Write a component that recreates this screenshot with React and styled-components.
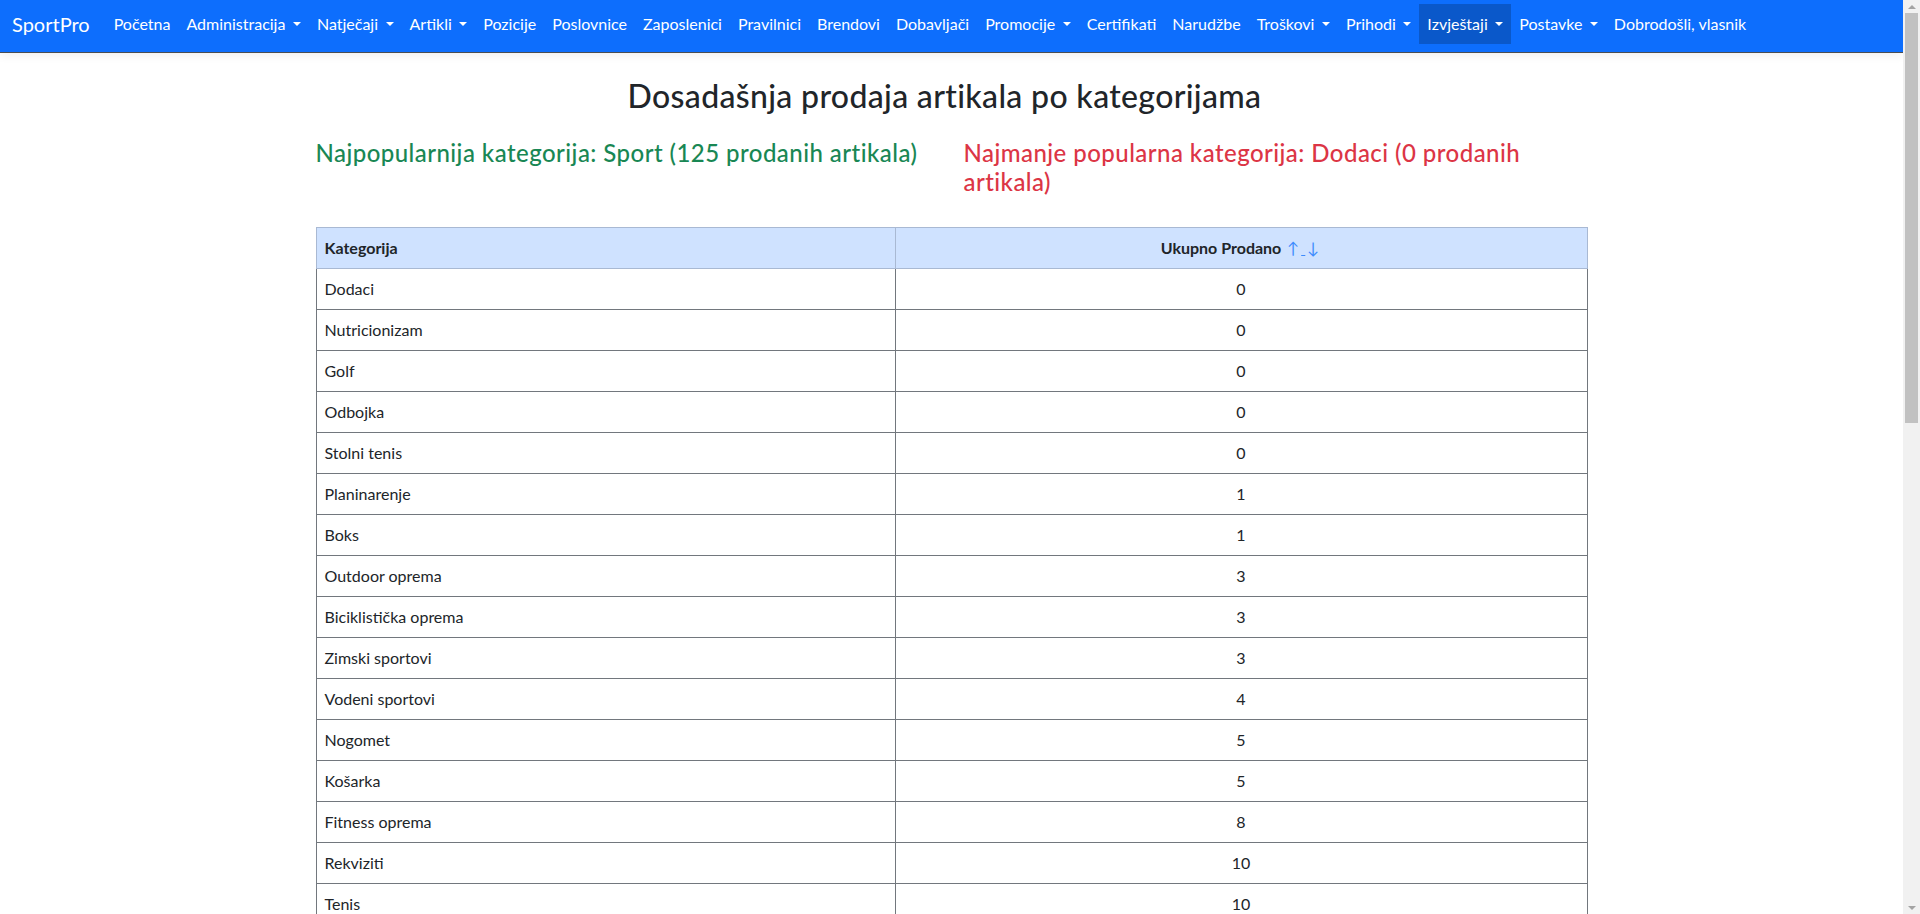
import React from 'react'
import styled, { createGlobalStyle } from 'styled-components'

const GlobalStyle = createGlobalStyle`
  body {
    margin: 0;
    font-family: Lato, "Noto Sans", sans-serif;
    font-size: 16px;
    line-height: 1.5;
    color: #212529;
    background: #fff;
  }
  * {
    box-sizing: border-box;
  }
`

const navItems = [
  { label: 'Početna' },
  { label: 'Administracija', dropdown: true },
  { label: 'Natječaji', dropdown: true },
  { label: 'Artikli', dropdown: true },
  { label: 'Pozicije' },
  { label: 'Poslovnice' },
  { label: 'Zaposlenici' },
  { label: 'Pravilnici' },
  { label: 'Brendovi' },
  { label: 'Dobavljači' },
  { label: 'Promocije', dropdown: true },
  { label: 'Certifikati' },
  { label: 'Narudžbe' },
  { label: 'Troškovi', dropdown: true },
  { label: 'Prihodi', dropdown: true },
  { label: 'Izvještaji', dropdown: true, active: true },
  { label: 'Postavke', dropdown: true },
  { label: 'Dobrodošli, vlasnik' },
]

const categories = [
  ['Dodaci', 0],
  ['Nutricionizam', 0],
  ['Golf', 0],
  ['Odbojka', 0],
  ['Stolni tenis', 0],
  ['Planinarenje', 1],
  ['Boks', 1],
  ['Outdoor oprema', 3],
  ['Biciklistička oprema', 3],
  ['Zimski sportovi', 3],
  ['Vodeni sportovi', 4],
  ['Nogomet', 5],
  ['Košarka', 5],
  ['Fitness oprema', 8],
  ['Rekviziti', 10],
  ['Tenis', 10],
  ['Trčanje', 14],
  ['Sport', 125],
]

const App = () => (
  <>
    <GlobalStyle />
    <Page>
      <Navbar>
        <Brand>SportPro</Brand>
        <NavList>
          {navItems.map((item) => (
            <NavLink key={item.label} $active={item.active} $dropdown={item.dropdown}>
              {item.label}
            </NavLink>
          ))}
        </NavList>
      </Navbar>
      <Container>
        <Inner>
          <Title>Dosadašnja prodaja artikala po kategorijama</Title>
          <StatsRow>
            <Stat $tone="#198754">Najpopularnija kategorija: Sport (125 prodanih artikala)</Stat>
            <Stat $tone="#dc3545">Najmanje popularna kategorija: Dodaci (0 prodanih artikala)</Stat>
          </StatsRow>
          <Table>
            <thead>
              <tr>
                <HeadCell $width="579px">Kategorija</HeadCell>
                <HeadCell $center>
                  Ukupno Prodano <SortLink>↑</SortLink><SortGap>&nbsp;</SortGap><SortLink>↓</SortLink>
                </HeadCell>
              </tr>
            </thead>
            <tbody>
              {categories.map(([name, total]) => (
                <tr key={name}>
                  <Cell>{name}</Cell>
                  <Cell $center>{total}</Cell>
                </tr>
              ))}
            </tbody>
          </Table>
        </Inner>
      </Container>
    </Page>
    <Scrollbar>
      <ScrollArrow />
      <ScrollThumb />
      <ScrollArrow $down />
    </Scrollbar>
  </>
)

export default App

const Page = styled.div`
  margin-right: 17px;
`

const Navbar = styled.nav`
  display: flex;
  align-items: flex-start;
  height: 52px;
  padding: 4px 12px 0;
  background: #0d6efd;
  box-shadow: 0 1px 0 #4a4d52, 0 3px 10px rgba(0, 0, 0, 0.07);
  position: relative;
`

const Brand = styled.a`
  margin-right: 16px;
  padding: 5px 0;
  font-size: 20px;
  line-height: 30px;
  color: #fff;
  text-decoration: none;
  white-space: nowrap;
`

const NavList = styled.div`
  display: flex;
  align-items: center;
`

const NavLink = styled.a`
  display: block;
  padding: 8px;
  line-height: 24px;
  color: #fff;
  white-space: nowrap;
  background: ${(p) => (p.$active ? '#0a58ca' : 'transparent')};
  &::after {
    content: ${(p) => (p.$dropdown ? "''" : 'none')};
    display: inline-block;
    margin-left: 7.5px;
    vertical-align: 0.255em;
    border-top: 0.3em solid #fff;
    border-right: 0.28em solid transparent;
    border-left: 0.28em solid transparent;
  }
`

const Container = styled.main`
  max-width: 1320px;
  margin: 25px auto 0;
  padding: 0 12px;
`

const Inner = styled.div`
  padding: 0 12px;
`

const Title = styled.h2`
  margin: 0 0 24px;
  padding-right: 14px;
  font-size: 32px;
  font-weight: 500;
  line-height: 1.2;
  letter-spacing: 0.33px;
  text-align: center;
`

const StatsRow = styled.div`
  display: grid;
  grid-template-columns: 1fr 1fr;
  column-gap: 24px;
  margin-bottom: 30px;
`

const Stat = styled.h4`
  margin: 0;
  font-size: 24px;
  font-weight: 500;
  line-height: 1.2;
  letter-spacing: 0.45px;
  color: ${(p) => p.$tone};
`

const Table = styled.table`
  width: 100%;
  border-collapse: collapse;
`

const HeadCell = styled.th`
  width: ${(p) => p.$width || 'auto'};
  padding: 8px;
  text-align: ${(p) => (p.$center ? 'center' : 'left')};
  font-weight: 700;
  background: #cfe2ff;
  border: 1px solid #a9b9d3;
`

const SortLink = styled.span`
  margin: 0 2px;
  font-weight: 400;
  color: #3d8bfd;
`

const SortGap = styled.span`
  font-weight: 400;
  color: #3d8bfd;
  text-decoration: underline;
`

const Cell = styled.td`
  padding: 8px;
  text-align: ${(p) => (p.$center ? 'center' : 'left')};
  border: 1px solid #72777d;
`

const Scrollbar = styled.div`
  position: fixed;
  top: 0;
  right: 0;
  bottom: 0;
  width: 17px;
  display: flex;
  flex-direction: column;
  align-items: center;
  background: #f1f1f1;
`

const ScrollArrow = styled.div`
  flex: none;
  width: 0;
  height: 0;
  margin: 5px 0 4px;
  border-left: 4px solid transparent;
  border-right: 4px solid transparent;
  border-bottom: ${(p) => (p.$down ? 'none' : '4px solid #a3a3a3')};
  border-top: ${(p) => (p.$down ? '4px solid #a3a3a3' : 'none')};
  margin-top: ${(p) => (p.$down ? 'auto' : '5px')};
`

const ScrollThumb = styled.div`
  flex: none;
  width: 13px;
  height: 410px;
  background: #c1c1c1;
`
